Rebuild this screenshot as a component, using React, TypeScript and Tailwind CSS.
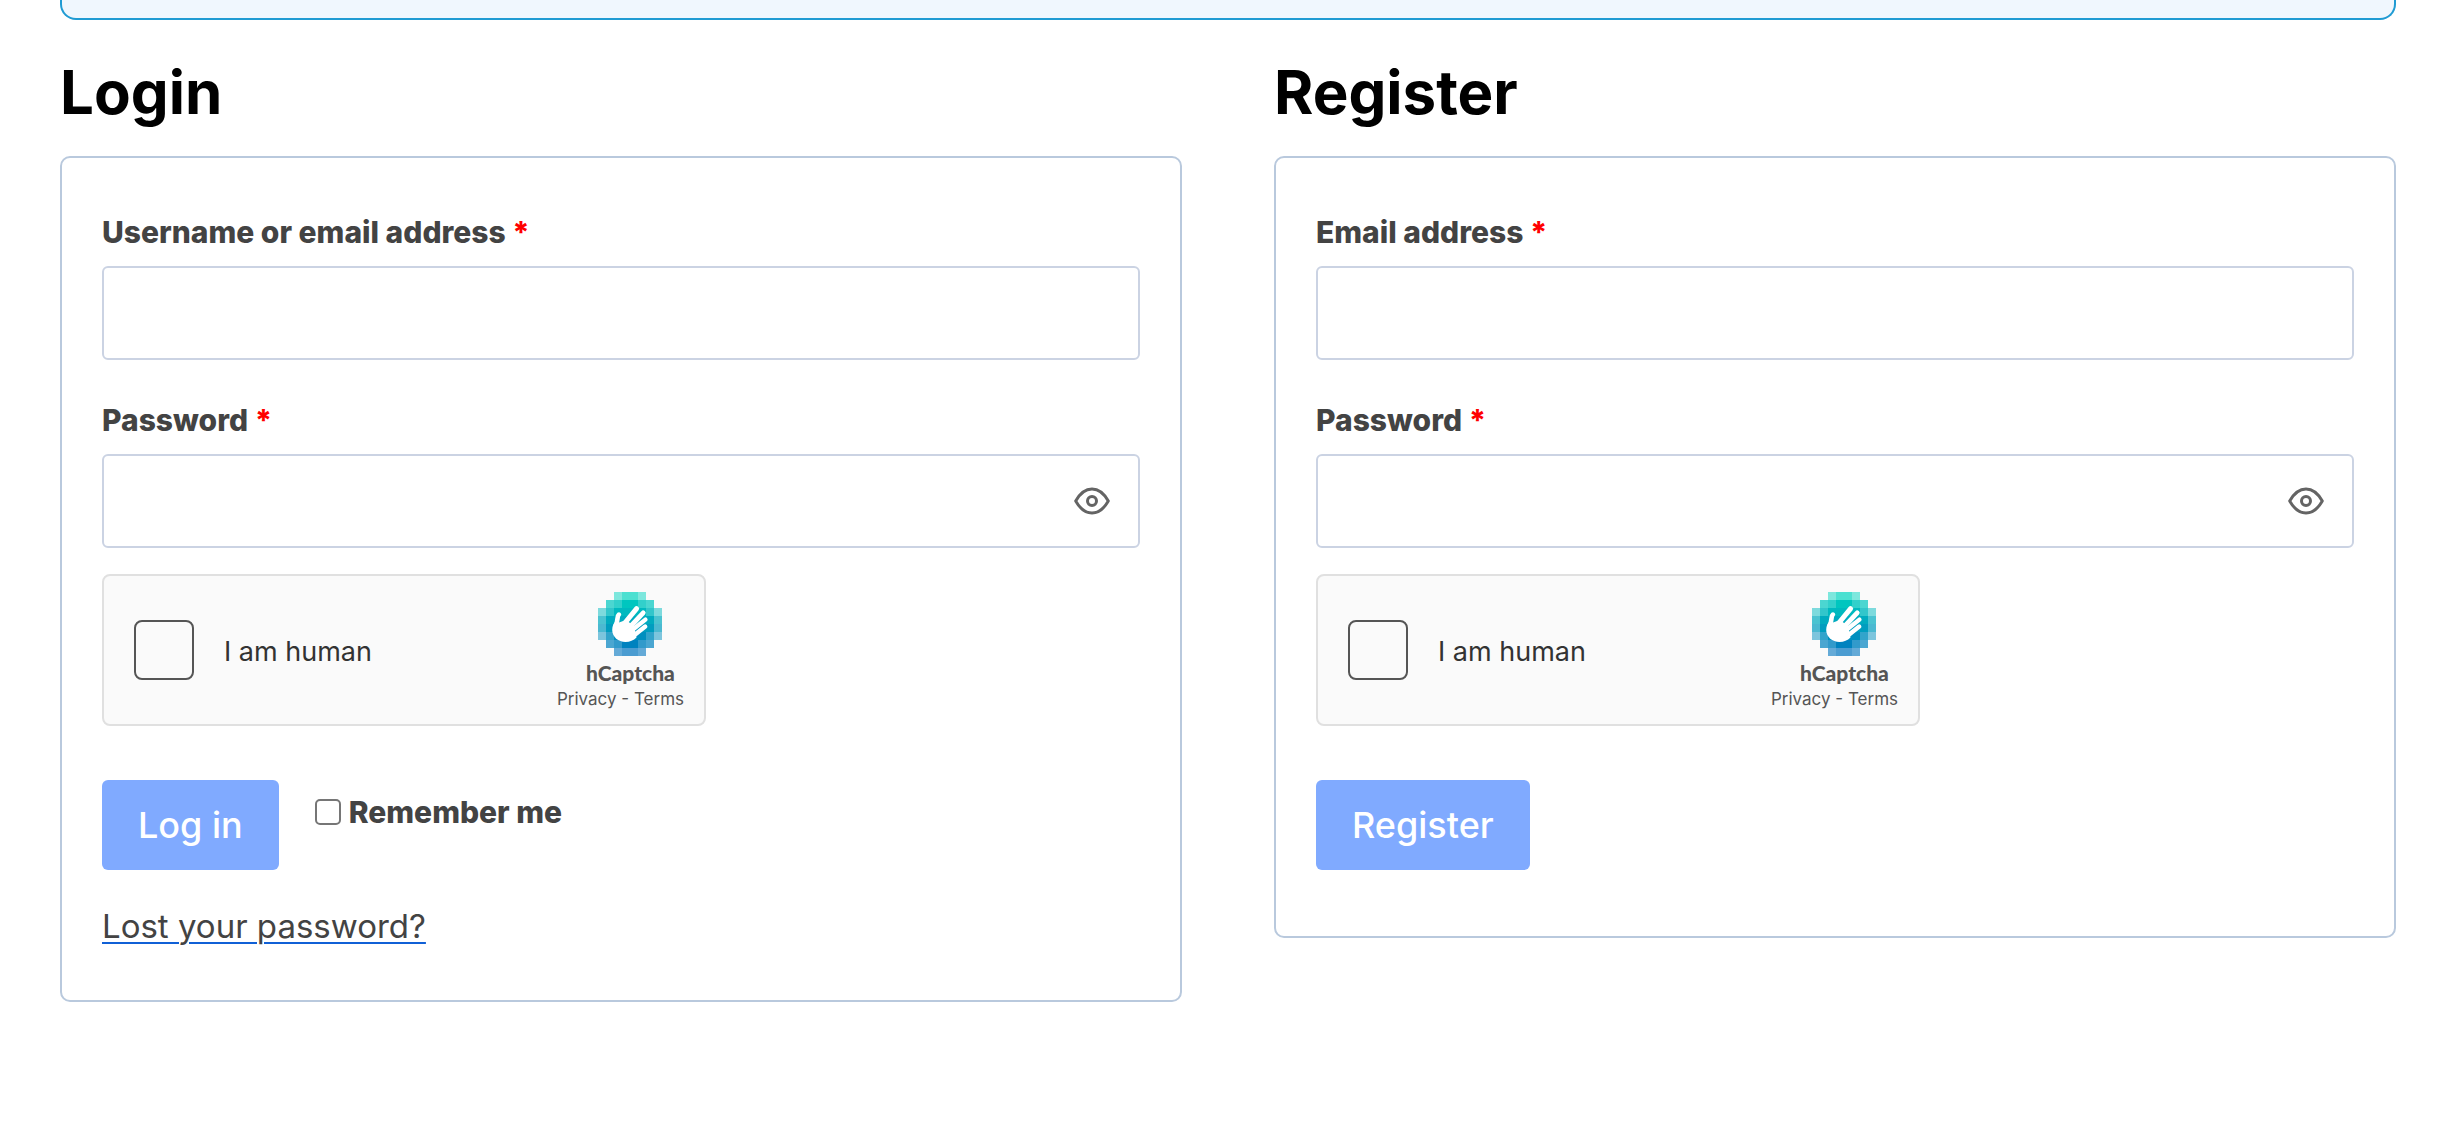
import type { ReactNode } from "react";

const logoRows = [
  { color: "#00D4BF", cells: [0, 0, 0.5, 0.7, 0.7, 0.5, 0, 0] },
  { color: "#00C6BF", cells: [0, 0.7, 0.8, 1, 1, 0.8, 0.7, 0] },
  { color: "#00B9BF", cells: [0.5, 0.8, 1, 1, 1, 1, 0.8, 0.5] },
  { color: "#00ABBF", cells: [0.7, 1, 1, 1, 1, 1, 1, 0.7] },
  { color: "#009DBF", cells: [0.7, 1, 1, 1, 1, 1, 1, 0.7] },
  { color: "#008FBF", cells: [0.5, 0.8, 1, 1, 1, 1, 0.8, 0.5] },
  { color: "#0082BF", cells: [0, 0.7, 0.8, 1, 1, 0.8, 0.7, 0] },
  { color: "#0074BF", cells: [0, 0, 0.6, 0.7, 0.7, 0.6, 0, 0] },
];

function CaptchaLogo() {
  return (
    <svg className="size-16" viewBox="0 0 64 64" aria-hidden="true">
      <g shapeRendering="crispEdges">
        {logoRows.map((row, y) =>
          row.cells.map((opacity, x) =>
            opacity ? (
              <rect key={`${x}-${y}`} x={x * 8} y={y * 8} width="8" height="8" fill={row.color} opacity={opacity} />
            ) : null
          )
        )}
      </g>
      {/* hand */}
      <path
        d="M18.2 29C15.5 31 14.2 34 14.2 38C14.2 45 20.5 50 27.5 50C32 50 35.5 48.3 38.5 45.5L36 34L28 28L21 30.5Z"
        fill="#fff"
      />
      <g fill="none" stroke="#fff" strokeLinecap="round">
        <path d="M20.9 22.6C18.6 24.6 20.4 28 17.8 33" strokeWidth="4.6" />
        <path d="M38.6 16.6L26 32" strokeWidth="5" />
        <path d="M45.2 20.8L31 36" strokeWidth="4.8" />
        <path d="M47.4 27.6L33 39" strokeWidth="4.4" />
        <path d="M47.2 34.6L34 45" strokeWidth="4.4" />
      </g>
    </svg>
  );
}

function EyeIcon() {
  return (
    <svg className="h-7 w-9" viewBox="0 0 36 28" fill="none" stroke="currentColor" strokeWidth="3" aria-hidden="true">
      <path
        d="M1.7 14C6.2 6 11.5 2 18 2S29.8 6 34.3 14C29.8 22 24.5 26 18 26S6.2 22 1.7 14Z"
        strokeLinejoin="round"
      />
      <circle cx="18" cy="14" r="4.5" />
    </svg>
  );
}

function Field({ id, label, type }: { id: string; label: string; type: string }) {
  return (
    <div>
      <label htmlFor={id} className="mb-2 block text-[30px] leading-[52px] font-extrabold">
        {label} <span className="text-[#ff0000]">*</span>
      </label>
      <div className="relative">
        <input
          id={id}
          type={type}
          className="block h-[94px] w-full rounded-md border-2 border-[#cbd3e3] bg-white px-6 text-[32px]"
        />
        {type === "password" && (
          <button
            type="button"
            aria-label="Show password"
            className="absolute inset-y-0 right-[30px] flex items-center text-[#646464]"
          >
            <EyeIcon />
          </button>
        )}
      </div>
    </div>
  );
}

function Captcha({ id }: { id: string }) {
  return (
    <div className="mt-[26px] flex h-[152px] w-full max-w-[604px] justify-between rounded-lg border-2 border-[#e0e0e0] bg-[#fafafa] pl-[30px]">
      <div className="flex items-center gap-[30px]">
        <input
          id={id}
          type="checkbox"
          className="size-[60px] appearance-none rounded-lg border-2 border-[#555555] bg-[#fafafa]"
        />
        <label htmlFor={id} className="pt-1 text-[27px] text-[#333333]">
          I am human
        </label>
      </div>
      <div className="flex flex-col items-center pt-4 pr-5 text-[#555555]">
        <div className="flex flex-col items-center pl-5">
          <CaptchaLogo />
          <span className="mt-1 font-[Lato,sans-serif] text-[21px] leading-[26px] font-black">hCaptcha</span>
        </div>
        <span className="text-[17px] leading-[26px]">
          <a href="#privacy">Privacy</a> - <a href="#terms">Terms</a>
        </span>
      </div>
    </div>
  );
}

function SubmitButton({ children }: { children: ReactNode }) {
  return (
    <button type="submit" className="h-[90px] rounded-md bg-[#80aaff] px-9 text-[36px] font-medium text-white">
      {children}
    </button>
  );
}

function FormPanel({ title, children }: { title: string; children: ReactNode }) {
  return (
    <section>
      <h2 className="mb-7 text-[60px] leading-[72px] font-bold text-black">{title}</h2>
      <form className="rounded-[10px] border-2 border-[#b9c9dd] px-10 py-12">{children}</form>
    </section>
  );
}

export default function App() {
  return (
    <main className="min-h-screen bg-white px-[60px] font-[Inter,sans-serif] text-[#434343]">
      <div className="h-5 rounded-b-2xl border-2 border-t-0 border-[#209bd3] bg-[#f0f7fe]" />
      <div className="mt-9 grid grid-cols-2 items-start gap-[92px]">
        <FormPanel title="Login">
          <div className="flex flex-col gap-[34px]">
            <Field id="username" label="Username or email address" type="text" />
            <Field id="login-password" label="Password" type="password" />
          </div>
          <Captcha id="login-human" />
          <div className="mt-[54px] flex items-start gap-9">
            <SubmitButton>Log in</SubmitButton>
            <div className="flex h-16 items-center gap-2">
              <input
                id="remember"
                type="checkbox"
                className="size-[26px] appearance-none rounded-[5px] border-2 border-[#767676] bg-white"
              />
              <label htmlFor="remember" className="text-[30px] font-extrabold">
                Remember me
              </label>
            </div>
          </div>
          <p className="mt-[30px] text-[33px] leading-[52px]">
            <a href="#lost-password" className="underline decoration-[#1060d6] decoration-2 underline-offset-4">
              Lost your password?
            </a>
          </p>
        </FormPanel>
        <FormPanel title="Register">
          <div className="flex flex-col gap-[34px]">
            <Field id="email" label="Email address" type="email" />
            <Field id="register-password" label="Password" type="password" />
          </div>
          <Captcha id="register-human" />
          <div className="mt-[54px] mb-[18px]">
            <SubmitButton>Register</SubmitButton>
          </div>
        </FormPanel>
      </div>
    </main>
  );
}
